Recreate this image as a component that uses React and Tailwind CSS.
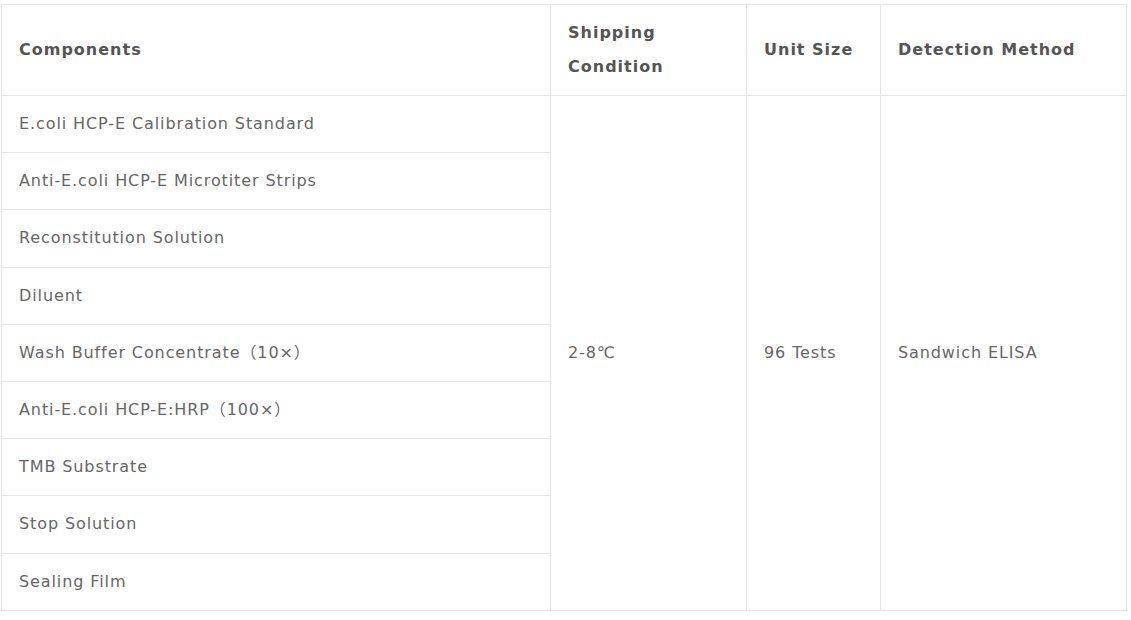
import React from "react";

const components = [
  "E.coli HCP-E Calibration Standard",
  "Anti-E.coli HCP-E Microtiter Strips",
  "Reconstitution Solution",
  "Diluent",
  "Wash Buffer Concentrate（10×）",
  "Anti-E.coli HCP-E:HRP（100×）",
  "TMB Substrate",
  "Stop Solution",
  "Sealing Film",
];

const App = () => {
  const th = "border border-[#e5e5e5] px-[17px] py-[11px] text-left align-middle font-bold text-[#555] tracking-[1px]";
  const td = "border border-[#e5e5e5] px-[17px] py-[11.1px] align-middle tracking-[0.9px]";

  return (
    <div className="min-h-screen bg-white pt-1 pl-px" style={{ fontFamily: '"DejaVu Sans", "Noto Sans CJK SC", sans-serif' }}>
      <table className="table-fixed border-collapse w-[1125px] text-[16px] leading-[34px] text-[#666]">
        <colgroup>
          <col className="w-[549px]" />
          <col className="w-[196px]" />
          <col className="w-[134px]" />
          <col className="w-[246px]" />
        </colgroup>
        <thead>
          <tr>
            <th className={th}>Components</th>
            <th className={th}>
              Shipping
              <br />
              Condition
            </th>
            <th className={th}>Unit Size</th>
            <th className={th}>Detection Method</th>
          </tr>
        </thead>
        <tbody>
          {components.map((name, i) => (
            <tr key={name}>
              <td className={td}>{name}</td>
              {i === 0 && (
                <>
                  <td rowSpan={9} className={td}>2-8℃</td>
                  <td rowSpan={9} className={td}>96 Tests</td>
                  <td rowSpan={9} className={td}>Sandwich ELISA</td>
                </>
              )}
            </tr>
          ))}
        </tbody>
      </table>
    </div>
  );
};

export default App;
